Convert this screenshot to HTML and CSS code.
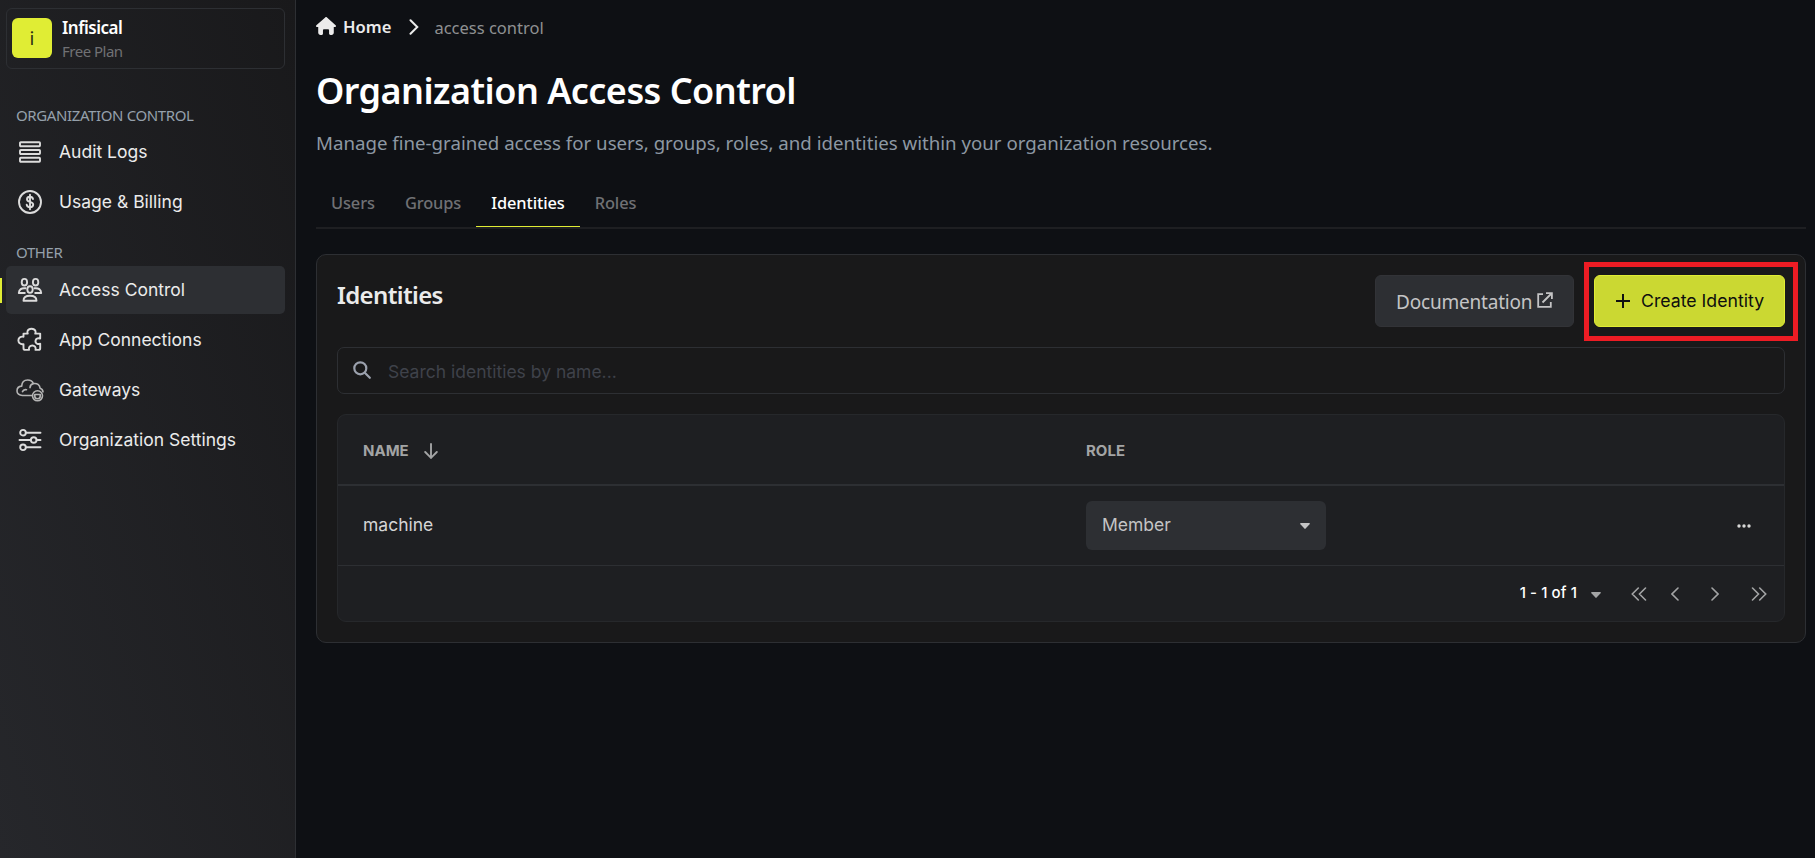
FILE: index.html
```html
<!DOCTYPE html>
<html lang="en">
<head>
<meta charset="utf-8">
<title>Organization Access Control</title>
<link rel="stylesheet" href="styles.css">
</head>
<body>
<div class="app">
  <aside class="sidebar">
    <div class="org">
      <div class="org-avatar">i</div>
      <div class="org-text">
        <div class="org-name">Infisical</div>
        <div class="org-plan">Free Plan</div>
      </div>
    </div>
    <div class="side-label">ORGANIZATION CONTROL</div>
    <nav class="side-nav side-nav-org">
      <a class="side-item">
        <svg class="side-icon" viewBox="0 0 28 28"><g class="line"><rect x="4" y="4.2" width="20" height="4" rx=".8"/><rect x="4" y="12" width="20" height="4" rx=".8"/><rect x="4" y="19.8" width="20" height="4" rx=".8"/></g></svg>
        <span>Audit Logs</span>
      </a>
      <a class="side-item">
        <svg class="side-icon" viewBox="0 0 28 28"><g class="line"><circle cx="14" cy="14" r="11"/><path d="M17 11c-.3-1.500-1.300-2.300-3-2.300s-3 .9-3 2.500c0 3.500 6.200 2 6.200 5.400 0 1.700-1.300 2.700-3.200 2.700s-3.100-.9-3.300-2.600M14 6.800v14.400"/></g></svg>
        <span>Usage &amp; Billing</span>
      </a>
    </nav>
    <div class="side-label side-label-other">OTHER</div>
    <nav class="side-nav">
      <a class="side-item active">
        <svg class="side-icon" viewBox="0 0 28 28"><g class="line"><ellipse cx="8.400" cy="6.200" rx="2.700" ry="3.300"/><ellipse cx="19.600" cy="6.200" rx="2.700" ry="3.300"/><ellipse cx="14" cy="13.600" rx="2.700" ry="3.300"/><path d="M9.500 12.300C5.500 11.800 3 13.500 2.800 17h6M18.500 12.300c4-.5 6.500 1.200 6.700 4.700h-6M7.500 24.800c0-3.500 2.300-5 6.500-5s6.500 1.500 6.500 5z"/></g></svg>
        <span>Access Control</span>
      </a>
      <a class="side-item">
        <svg class="side-icon" viewBox="0 0 28 28"><path class="line" d="M7.500 7.600h4.300c-.6-1.100-.5-2-.2-2.800C12.300 3.200 13.700 2.700 15.500 2.700s3.200.5 3.900 2.100c.3.800.4 1.700-.2 2.800h5v4.900c-1.700-.5-4 0-4.500 1.600-.5 1.500.1 2.900 1.200 3.500 1 .5 2.200.6 3.300.1v4.500c0 1.100-.7 1.700-1.700 1.700h-3c.4-1.200.2-2.300-.5-3.200-1.300-1.600-4.100-1.600-5.400 0-.7.900-.9 2-.5 3.200H9.200c-1 0-1.700-.7-1.700-1.700v-4.100c-1.300.3-2.900.1-3.900-.9-1.700-1.600-1.600-4.200.1-5.600 1.100-.9 2.500-1.100 3.800-.8z"/></svg>
        <span>App Connections</span>
      </a>
      <a class="side-item">
        <svg class="side-icon" viewBox="0 0 28 28"><g class="line thin"><path d="M16.500 19.500H6.300C3.200 19.500 1 17.600 1 14.900c0-2.600 1.900-4.600 4.700-4.800C5.900 6.300 8.300 4 11.700 4c2.800 0 4.800 1.300 5.700 3.600 3.700-.7 6.500 1.300 6.700 4.700 1.700.6 2.700 1.800 2.900 3.600M6.500 15.600c.6-1.500 2-2.300 4-1.900M14 11.600c.2-2.300 1.400-3.700 3.400-4"/><circle cx="21.500" cy="19.800" r="5"/><path d="M18.800 18.500h5.400v1.800c0 1.500-1.200 2.400-2.700 2.400s-2.700-.9-2.700-2.400z"/></g></svg>
        <span>Gateways</span>
      </a>
      <a class="side-item">
        <svg class="side-icon" viewBox="0 0 28 28"><g class="line"><circle cx="7" cy="6.700" r="2.800"/><path d="M10 6.700h14.500M3.500 14h11.200M20.700 14h3.800M10 21.300h14.500"/><circle cx="17.700" cy="14" r="2.800"/><circle cx="7" cy="21.300" r="2.800"/></g></svg>
        <span>Organization Settings</span>
      </a>
    </nav>
  </aside>

  <main class="main">
    <div class="crumbs">
      <svg class="home-icon" viewBox="0 0 576 512"><path d="M575.800 255.500c0 18-15 32.100-32 32.100h-32l.7 160.200c.2 35.500-28.500 64.300-64 64.300h-32.100c-17.700 0-40-14.300-40-32V384c0-17.700-14.300-32-32-32h-112c-17.700 0-32 14.300-32 32v96c0 17.700-14.300 32-32 32H128c-35.300 0-64-28.700-64-64V287.600H32c-18 0-32-14-32-32.100 0-9 3-17 10-24L266.400 8c7-7 15-8 22-8s15 2 21 7l255.400 224.500c8 7 12 15 11 24z"/></svg>
      <span class="crumb-home">Home</span>
      <svg class="crumb-sep" viewBox="0 0 10 16"><path d="M1.500 1.200 8.300 8l-6.800 6.800"/></svg>
      <span class="crumb-current">access control</span>
    </div>
    <h1 class="title">Organization Access Control</h1>
    <p class="subtitle">Manage fine-grained access for users, groups, roles, and identities within your organization resources.</p>
    <div class="tabs">
      <div class="tab">Users</div>
      <div class="tab">Groups</div>
      <div class="tab selected">Identities</div>
      <div class="tab">Roles</div>
    </div>

    <section class="panel">
      <header class="panel-head">
        <h2 class="panel-title">Identities</h2>
        <div class="actions">
          <button class="btn btn-docs"><span>Documentation</span><svg class="ext-icon" viewBox="0 0 16 16"><path d="M6 2.200H1.200v12.600h12.600V10M9 1.100h5.900V7M14.500 1.500 5.500 10.500"/></svg></button>
          <div class="create-wrap">
            <button class="btn btn-create"><svg class="plus-icon" viewBox="0 0 16 16"><path d="M8 1v14M1 8h14"/></svg><span>Create Identity</span></button>
            <div class="highlight"></div>
          </div>
        </div>
      </header>
      <div class="search">
        <svg class="search-icon" viewBox="0 0 18 18"><circle cx="7.300" cy="7.300" r="6"/><path d="m11.800 11.800 5 5"/></svg>
        <span>Search identities by name...</span>
      </div>
      <div class="table">
        <div class="row row-head">
          <div class="cell-name"><span class="th">NAME</span><svg class="sort-icon" viewBox="0 0 14 16"><path d="M7 1v14M1.200 9 7 14.800 12.800 9"/></svg></div>
          <div class="cell-role"><span class="th">ROLE</span></div>
        </div>
        <div class="row row-body">
          <div class="cell-name"><span class="identity">machine</span></div>
          <div class="cell-role">
            <div class="select"><span>Member</span><svg class="caret" viewBox="0 0 10 6"><path d="M.8 0h8.400q1.100.4.4 1.300L5.600 5.600q-.6.600-1.200 0L.4 1.300Q-.3.400.8 0z"/></svg></div>
          </div>
          <svg class="dots" viewBox="0 0 14 4"><circle cx="2" cy="2" r="1.700"/><circle cx="7" cy="2" r="1.700"/><circle cx="12" cy="2" r="1.700"/></svg>
        </div>
        <div class="pager">
          <span class="pager-text">1 - 1 of 1</span>
          <svg class="caret pager-caret" viewBox="0 0 10 6"><path d="M.8 0h8.400q1.100.4.4 1.300L5.600 5.600q-.6.600-1.200 0L.4 1.300Q-.3.400.8 0z"/></svg>
          <svg class="pg pg-first" viewBox="0 0 16 14"><path d="M7.300 1 1.300 7l6 6M14.500 1l-6 6 6 6"/></svg>
          <svg class="pg pg-prev" viewBox="0 0 8 14"><path d="M7 1 1 7l6 6"/></svg>
          <svg class="pg pg-next" viewBox="0 0 8 14"><path d="m1 1 6 6-6 6"/></svg>
          <svg class="pg pg-last" viewBox="0 0 16 14"><path d="m1.500 1 6 6-6 6M8.700 1l6 6-6 6"/></svg>
        </div>
      </div>
    </section>
  </main>
</div>
</body>
</html>
```
FILE: styles.css
```css
* { box-sizing: border-box; }

body {
  margin: 0;
  background: #0e1014;
  color: #ebebeb;
  font-family: Inter, sans-serif;
}

svg { display: block; flex: none; fill: none; }

.app { display: flex; height: 858px; overflow: hidden; }

.sidebar {
  flex: none;
  width: 296px;
  padding: 8px 10px 0 6px;
  border-right: 1px solid #2d2f33;
  background: linear-gradient(to top right, #26272b, #19191b);
}

.org {
  display: flex;
  align-items: center;
  height: 61px;
  padding-left: 5px;
  border: 1px solid #2d2f33;
  border-radius: 6px;
}

.org-avatar {
  width: 40px;
  height: 40px;
  margin: -1px 10px 0 0;
  border-radius: 6px;
  background: #e0ed34;
  color: #2b2e15;
  font-size: 18px;
  line-height: 41px;
  text-align: center;
}

.org-text, .side-label, .main { font-family: "Noto Sans", sans-serif; }
.org-name { color: #fff; font-size: 17px; font-weight: 600; line-height: 24px; letter-spacing: -.5px; padding-top: 1px; }
.org-plan { color: #707174; font-size: 15px; line-height: 23px; letter-spacing: -.5px; }

.side-label {
  height: 23px;
  margin: 35px 0 0 10px;
  color: #95a0ab;
  font-size: 15px;
  letter-spacing: -.38px;
  line-height: 22px;
  white-space: nowrap;
}
.side-label-other { margin-top: 15px; }

.side-nav { display: grid; gap: 2px; margin-top: 2px; }
.side-nav-org { margin-top: 1px; }

.side-item {
  position: relative;
  display: flex;
  align-items: center;
  height: 48px;
  padding-left: 10px;
  gap: 15px;
  border-radius: 5px;
  color: #ebebeb;
  font-size: 17.5px;
}
.side-item span { padding-bottom: 2px; }
.side-item.active { background: #2d2f33; }
.side-item.active::before {
  content: "";
  position: absolute;
  left: -6px;
  top: 12px;
  width: 2px;
  height: 25px;
  background: #e0ed34;
}
.side-icon { width: 28px; height: 28px; }
.line { stroke: #dcdcdc; stroke-width: 1.9; stroke-linecap: round; stroke-linejoin: round; }
.thin { stroke: #b5b5b5; stroke-width: 1.6; }

.main { flex: 1; padding: 12px 9px 0 20px; }

.crumbs { display: flex; align-items: center; height: 30px; }
.home-icon { width: 20px; height: 18px; margin: -2px 7px 0 0; fill: #ebebeb; }
.crumb-home { padding-bottom: 2px; color: #ebebeb; font-size: 16.6px; font-weight: 600; }
.crumb-sep { width: 10px; height: 16px; margin: 0 15px 0 18px; stroke: #ebebeb; stroke-width: 2; stroke-linecap: round; }
.crumb-current { color: #8f9092; font-size: 16.5px; }

.title { height: 48px; margin: 24px 0 0; color: #fff; font-size: 36px; font-weight: 600; letter-spacing: -.54px; line-height: 50px; white-space: nowrap; }
.subtitle { height: 28px; margin: 15px 0 0; color: #8d98a3; font-size: 18.68px; line-height: 28px; white-space: nowrap; }

.tabs { display: flex; height: 52px; margin-top: 20px; border-bottom: 2px solid #1e1f22; }
.tab { height: 50px; padding: 0 15px; color: #707174; font-size: 16.4px; font-weight: 500; letter-spacing: -.1px; line-height: 52px; white-space: nowrap; }
.tab.selected { border-bottom: 1px solid #e0ed34; color: #fff; }

.panel {
  height: 389px;
  margin-top: 25px;
  padding: 20px;
  border: 1px solid #2d2f33;
  border-radius: 10px;
  background: #19191a;
}
.panel-head { display: flex; justify-content: space-between; height: 52px; }
.panel-title { margin: 0; font-size: 24px; font-weight: 600; letter-spacing: -.65px; line-height: 39px; }
.actions { display: flex; gap: 20px; }

.btn { display: flex; align-items: center; height: 52px; border-radius: 6px; white-space: nowrap; }
.btn-docs {
  width: 199px;
  padding: 2px 0 0 20px;
  gap: 5px;
  border: 1px solid #323337;
  background: #2d2f33;
  color: #c4c4c5;
  font: 19px "Noto Sans", sans-serif;
  letter-spacing: -.2px;
}
.ext-icon { width: 16px; height: 16px; margin-top: -4px; stroke: #c4c4c5; stroke-width: 1.8; }
.create-wrap { position: relative; }
.btn-create {
  width: 191px;
  padding: 0 0 0 20px;
  gap: 10px;
  border: 1px solid #e0ed34;
  background: #cbd832;
  color: #0e0e0e;
  font: 17.7px Inter, sans-serif;
}
.btn-create span { padding-bottom: 2px; }
.plus-icon { width: 16px; height: 16px; stroke: #111; stroke-width: 2; }
.highlight { position: absolute; inset: -13px -13px -14px -10px; border: 5px solid #ed1c24; }

.search {
  display: flex;
  align-items: center;
  height: 47px;
  margin-top: 20px;
  padding-left: 15px;
  gap: 17px;
  border: 1px solid #2d2f33;
  border-radius: 7px;
  color: #3f424a;
  font: 17.5px Inter, sans-serif;
}
.search span { padding-top: 2px; }
.search-icon { width: 18px; height: 18px; margin-top: -1px; stroke: #9ba1ad; stroke-width: 2.2; stroke-linecap: round; }

.table {
  height: 208px;
  margin-top: 20px;
  border: 1px solid #26282b;
  border-radius: 9px;
  background: #1e1f22;
  font-family: Inter, sans-serif;
}
.row { display: grid; grid-template-columns: 748px 1fr 14px; align-items: center; padding-right: 33px; }
.row-head { height: 71px; padding-top: 2px; border-bottom: 2px solid #2d2f33; }
.row-body { height: 80px; border-bottom: 1px solid #2d2f33; }
.cell-name { display: flex; align-items: center; padding-left: 25px; }
.cell-role { display: flex; align-items: center; }
.th { color: #a3a4a5; font-size: 15px; font-weight: 700; line-height: 20px; }
.sort-icon { width: 14px; height: 16px; margin-left: 15px; stroke: #a3a4a5; stroke-width: 1.9; stroke-linecap: round; }
.identity { padding-bottom: 2px; color: #d5d5d6; font-size: 17.5px; }
.select {
  display: flex;
  align-items: center;
  justify-content: space-between;
  width: 240px;
  height: 49px;
  padding: 0 16px;
  border-radius: 6px;
  background: #2d2f33;
  color: #c4c4c5;
  font-size: 17.5px;
}
.select span { padding-bottom: 2px; }
.caret { width: 10px; height: 6px; fill: #c4c4c5; }
.dots { width: 14px; height: 4px; fill: #d8d8d8; }

.pager { display: flex; align-items: center; justify-content: flex-end; height: 54px; padding-right: 17px; }
.pager-text { padding-bottom: 1px; color: #fff; font-size: 15px; font-weight: 500; letter-spacing: .1px; }
.pager-caret { margin: 3px 30px 0 14px; fill: #a3a4a5; }
.pg { height: 14px; margin-top: 1px; stroke: #a3a4a5; stroke-width: 1.6; stroke-linecap: round; }
.pg-first, .pg-last { width: 16px; }
.pg-prev, .pg-next { width: 8px; }
.pg-prev { margin-left: 24px; }
.pg-next { margin-left: 32px; }
.pg-last { margin-left: 32px; }
```
